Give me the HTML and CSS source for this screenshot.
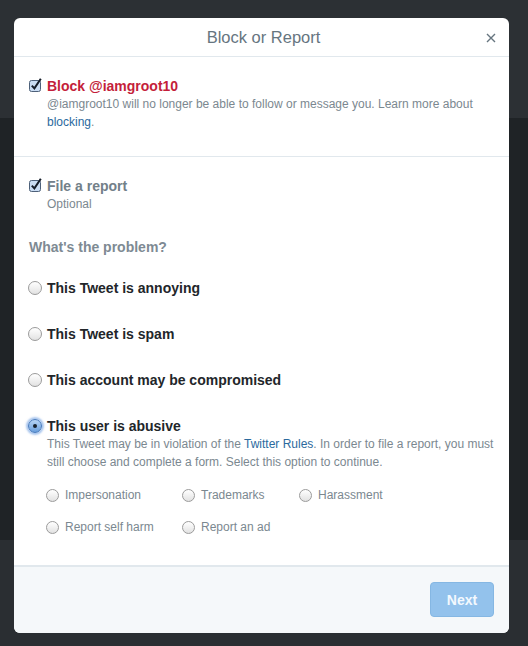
FILE: index.html
```html
<!DOCTYPE html>
<html lang="en">
  <head>
    <meta charset="UTF-8" />
    <meta name="viewport" content="width=device-width, initial-scale=1.0" />
    <title>Block or Report</title>
    <link rel="stylesheet" href="styles.css">
  </head>
  <body>
    <div class="modal">
      <div class="modal-header">
        <span></span>
        <h3 class="modal-title">Block or Report</h3>
        <button class="close" type="button" aria-label="Close">
          <svg width="10" height="10" viewBox="0 0 10 10">
            <path d="M1 1L9 9M9 1L1 9" stroke="#66757f" stroke-width="1.4" fill="none" />
          </svg>
        </button>
      </div>

      <div class="section">
        <div class="option">
          <span class="check">
            <svg width="14" height="14" viewBox="0 0 14 14">
              <rect x="0.5" y="2.5" width="11" height="11" rx="2" fill="#c9dcf3" stroke="#4d6079" />
              <path d="M2.8 7.6L5.4 10.4L11.8 0.8" stroke="#141c28" stroke-width="2" fill="none" />
            </svg>
          </span>
          <div>
            <div class="block-title">Block @iamgroot10</div>
            <p class="help">@iamgroot10 will no longer be able to follow or message you. Learn more about <a href="#">blocking</a>.</p>
          </div>
        </div>
      </div>

      <div class="section report">
        <div class="option">
          <span class="check">
            <svg width="14" height="14" viewBox="0 0 14 14">
              <rect x="0.5" y="2.5" width="11" height="11" rx="2" fill="#c9dcf3" stroke="#4d6079" />
              <path d="M2.8 7.6L5.4 10.4L11.8 0.8" stroke="#141c28" stroke-width="2" fill="none" />
            </svg>
          </span>
          <div>
            <div class="report-title">File a report</div>
            <p class="help">Optional</p>
          </div>
        </div>

        <div class="problem">What's the problem?</div>

        <div class="choices">
          <div class="option">
            <span class="radio"></span>
            <div class="choice-label">This Tweet is annoying</div>
          </div>
          <div class="option">
            <span class="radio"></span>
            <div class="choice-label">This Tweet is spam</div>
          </div>
          <div class="option">
            <span class="radio"></span>
            <div class="choice-label">This account may be compromised</div>
          </div>
          <div class="option">
            <span class="radio selected"></span>
            <div>
              <div class="choice-label">This user is abusive</div>
              <p class="help">This Tweet may be in violation of the <a href="#">Twitter Rules</a>. In order to file a report, you must still choose and complete a form. Select this option to continue.</p>
              <div class="sub-choices">
                <div class="sub"><span class="radio small"></span>Impersonation</div>
                <div class="sub"><span class="radio small"></span>Trademarks</div>
                <div class="sub"><span class="radio small"></span>Harassment</div>
                <div class="sub"><span class="radio small"></span>Report self harm</div>
                <div class="sub"><span class="radio small"></span>Report an ad</div>
              </div>
            </div>
          </div>
        </div>
      </div>

      <div class="modal-footer">
        <button class="btn-next" type="button">Next</button>
      </div>
    </div>
  </body>
</html>
```

FILE: styles.css
```css
* {
  margin: 0;
  padding: 0;
  box-sizing: border-box;
}
body {
  font-family: "Liberation Sans", Arial, sans-serif;
  height: 646px;
  padding: 18px 0 0 14px;
  background: linear-gradient(
    to bottom,
    #2c3034 0,
    #2c3034 118px,
    #1f2326 118px,
    #1f2326 540px,
    #2a2e32 540px
  );
}
.modal {
  width: 495px;
  background-color: #fff;
  border-radius: 6px;
  overflow: hidden;
}
.modal-header {
  height: 39px;
  border-bottom: 1px solid #e1e8ed;
  display: grid;
  grid-template-columns: 1fr auto 1fr;
  align-items: center;
  padding: 0 11px 0 15px;
}
.modal-title {
  font-size: 16.5px;
  font-weight: normal;
  color: #66757f;
  padding-top: 1px;
}
.close {
  justify-self: end;
  background: none;
  border: none;
  width: 14px;
  height: 14px;
  display: flex;
  align-items: center;
  justify-content: center;
  padding-top: 2px;
}
.section {
  padding: 20px 15px 25px;
  border-bottom: 1px solid #e1e8ed;
}
.section.report {
  padding-bottom: 29px;
}
.option {
  display: flex;
  align-items: flex-start;
}
.check {
  width: 18px;
  flex-shrink: 0;
  padding-top: 1px;
}
.block-title {
  font-size: 14px;
  font-weight: bold;
  color: #c41e3a;
  line-height: 18px;
}
.report-title {
  font-size: 14px;
  font-weight: bold;
  color: #728089;
  line-height: 18px;
}
.help {
  font-size: 12px;
  color: #7b8890;
  line-height: 18px;
}
a {
  color: #2b6a9e;
  text-decoration: none;
}
.problem {
  margin-top: 25px;
  font-size: 14px;
  font-weight: bold;
  color: #7e8a93;
  line-height: 18px;
}
.choices {
  margin-top: 23px;
  display: flex;
  flex-direction: column;
  gap: 28px;
}
.choice-label {
  font-size: 14px;
  font-weight: bold;
  color: #22262a;
  line-height: 18px;
}
.radio {
  width: 14px;
  height: 14px;
  margin: 2px 5px 0 -1px;
  flex-shrink: 0;
  border-radius: 50%;
  border: 1px solid #9b9b9b;
  background: linear-gradient(to bottom, #ffffff, #e2e2e2);
  display: inline-flex;
  align-items: center;
  justify-content: center;
}
.radio.selected {
  border-color: #4579bd;
  background: linear-gradient(to bottom, #b8d5f5, #6a9fdc);
  box-shadow: 0 0 2px 2px rgba(96, 150, 222, 0.55);
}
.radio.selected::after {
  content: "";
  width: 4px;
  height: 4px;
  border-radius: 50%;
  background-color: #17202b;
}
.radio.small {
  width: 13px;
  height: 13px;
  margin: 0 6px 0 0;
}
.sub-choices {
  margin-top: 15px;
  margin-left: -1px;
  display: grid;
  grid-template-columns: 136px 117px auto;
  row-gap: 14px;
}
.sub {
  display: flex;
  align-items: center;
  font-size: 12px;
  color: #7b8890;
  line-height: 18px;
}
.modal-footer {
  background-color: #f5f8fa;
  border-top: 1px solid #e1e8ed;
  height: 67px;
  display: flex;
  justify-content: flex-end;
  padding: 15px 15px 0;
}
.btn-next {
  width: 64px;
  height: 35px;
  background-color: #93c2ec;
  border: 1px solid #85b7e3;
  border-radius: 4px;
  color: #f4f9fe;
  font-family: "Liberation Sans", Arial, sans-serif;
  font-size: 14px;
  font-weight: bold;
}
```
